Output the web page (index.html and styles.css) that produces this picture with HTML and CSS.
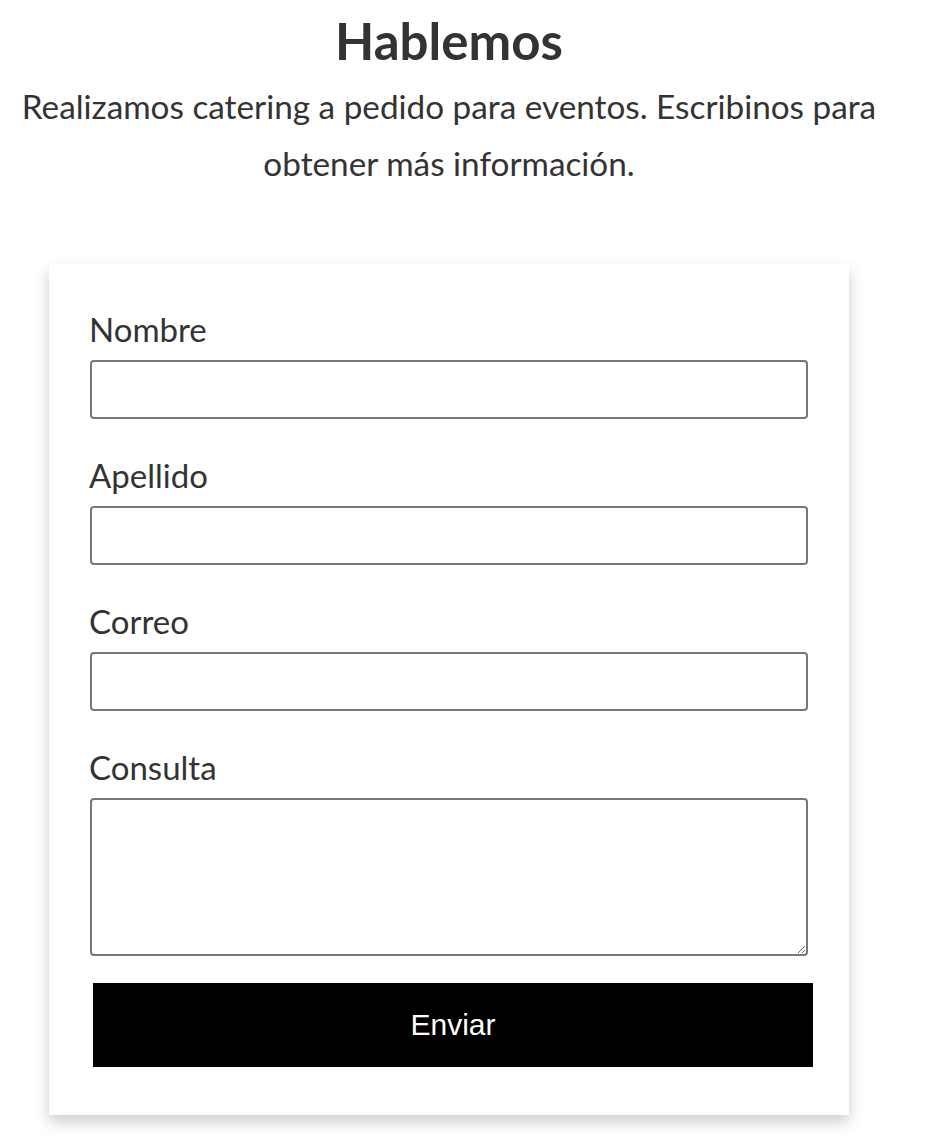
FILE: index.html
```html
<!DOCTYPE html>
<html lang="es">
<head>
<meta charset="utf-8">
<title>Hablemos</title>
<link rel="stylesheet" href="styles.css">
</head>
<body>
<main class="page">
  <header class="intro">
    <h1 class="title">Hablemos</h1>
    <p class="lead">Realizamos catering a pedido para eventos. Escribinos para obtener más información.</p>
  </header>
  <form class="card">
    <div class="field">
      <label class="label" for="nombre">Nombre</label>
      <input class="input" id="nombre" type="text">
    </div>
    <div class="field">
      <label class="label" for="apellido">Apellido</label>
      <input class="input" id="apellido" type="text">
    </div>
    <div class="field">
      <label class="label" for="correo">Correo</label>
      <input class="input" id="correo" type="email">
    </div>
    <div class="field field-last">
      <label class="label" for="consulta">Consulta</label>
      <textarea class="input textarea" id="consulta"></textarea>
    </div>
    <button class="submit" type="button">Enviar</button>
  </form>
</main>
</body>
</html>
```
FILE: styles.css
```css
* { box-sizing: border-box; }

html, body {
  margin: 0;
  padding: 0;
  background: #ffffff;
}

body {
  font-family: Lato, "Noto Sans", sans-serif;
  color: #333333;
}

.page {
  width: 898px;
  display: flex;
  flex-direction: column;
  align-items: center;
  padding-bottom: 24px;
}

.intro {
  width: 100%;
  text-align: center;
  padding-top: 9px;
}

.title {
  margin: 0;
  font-size: 51px;
  line-height: 64px;
  font-weight: 700;
}

.lead {
  margin: 5px 0 0;
  font-size: 33.3px;
  line-height: 57px;
  font-weight: 400;
}

.card {
  margin-top: 72px;
  width: 800px;
  padding: 43px 41px 48px;
  background: #ffffff;
  box-shadow: 0 7px 14px rgba(0, 0, 0, 0.2);
  display: flex;
  flex-direction: column;
}

.field {
  display: flex;
  flex-direction: column;
  margin-bottom: 34px;
}

.field-last {
  margin-bottom: 27px;
}

.label {
  font-size: 33px;
  line-height: 44px;
  margin-bottom: 9px;
  margin-left: -1px;
}

.input {
  display: block;
  width: 718px;
  height: 59px;
  border: 2px solid #767676;
  border-radius: 4px;
  background: #ffffff;
  font: inherit;
  margin: 0;
}

.textarea {
  height: 158px;
  resize: vertical;
}

.submit {
  margin-left: 3px;
  width: 720px;
  height: 84px;
  border: none;
  background: #000000;
  color: #ffffff;
  font-family: "Liberation Sans", Arial, sans-serif;
  font-size: 30px;
  padding: 0;
}
```
